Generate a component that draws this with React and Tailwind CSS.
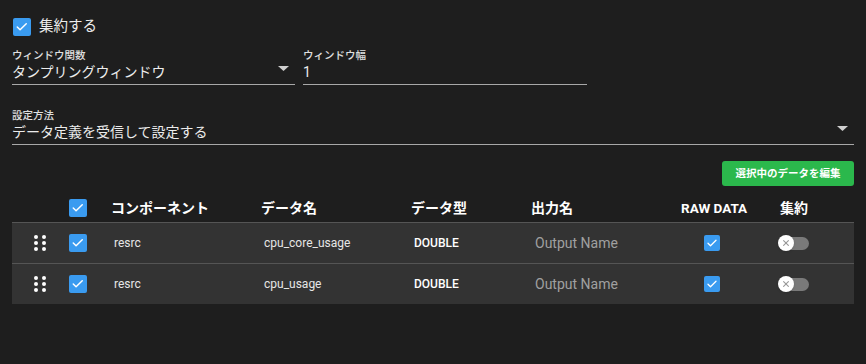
import React from "react";

const font = { fontFamily: "Roboto, 'Noto Sans CJK JP', sans-serif" };

function Check({ size = 18 }) {
  return (
    <div
      className="flex items-center justify-center rounded-[2px] bg-[#3a9bf0]"
      style={{ width: size, height: size }}
    >
      <svg width={size * 0.75} height={size * 0.75} viewBox="0 0 24 24" fill="none">
        <path d="M4 12.5l5 5L20 6.5" stroke="white" strokeWidth="2.6" strokeLinecap="round" strokeLinejoin="round" />
      </svg>
    </div>
  );
}

function Handle() {
  return (
    <div className="grid grid-cols-2 gap-x-[4px] gap-y-[2px] w-[12px]">
      {[0, 1, 2, 3, 4, 5].map((i) => (
        <div key={i} className="w-[4px] h-[4px] rounded-full bg-white" />
      ))}
    </div>
  );
}

function Toggle() {
  return (
    <div className="relative w-[31px] h-[16px] flex items-center">
      <div className="absolute left-[6px] right-0 h-[13px] rounded-full bg-[#7a7a7a]" />
      <div className="relative w-[16px] h-[16px] rounded-full bg-white flex items-center justify-center shadow">
        <svg width="8" height="8" viewBox="0 0 10 10">
          <path d="M2 2L8 8M8 2L2 8" stroke="#9a9a9a" strokeWidth="1.4" strokeLinecap="round" />
        </svg>
      </div>
    </div>
  );
}

function Arrow() {
  return (
    <svg width="11" height="5" viewBox="0 0 11 5">
      <path d="M0 0H11L5.5 5Z" fill="#cfcfcf" />
    </svg>
  );
}

function Field({ label, value, arrow, className }) {
  return (
    <div className={"border-b border-[#a8a8a8] pb-[2px] " + className}>
      <div className="text-[10.5px] leading-[12px] text-[#e0e0e0] font-medium">{label}</div>
      <div className="flex items-center justify-between h-[20px]">
        <span className="text-[14px] leading-[20px] text-[#ececec]">{value}</span>
        {arrow && <div className="mr-[6px] -mt-[8px]"><Arrow /></div>}
      </div>
    </div>
  );
}

const rows = [
  { comp: "resrc", name: "cpu_core_usage", type: "DOUBLE" },
  { comp: "resrc", name: "cpu_usage", type: "DOUBLE" },
];

export default function App() {
  return (
    <div className="w-[866px] h-[364px] bg-[#1e1e1e] px-3 overflow-hidden" style={font}>
      <div className="flex items-center gap-[8px] pt-[18px] pl-px">
        <Check size={18} />
        <span className="text-[14.5px] leading-[18px] text-[#ececec]">集約する</span>
      </div>

      <div className="flex gap-[8px] mt-[14px]">
        <Field className="w-[283px]" label="ウィンドウ関数" value="タンプリングウィンドウ" arrow />
        <Field className="w-[284px]" label="ウィンドウ幅" value="1" />
      </div>

      <Field className="mt-[25px]" label="設定方法" value="データ定義を受信して設定する" arrow />

      <div className="flex justify-end mt-[16px]">
        <button className="h-[25px] w-[132px] rounded-[3px] bg-[#2bb84c] text-white text-[10.5px] font-bold">
          選択中のデータを編集
        </button>
      </div>

      <div className="mt-[8px]">
        <div className="flex items-center h-[28px] text-white font-bold text-[14px]">
          <div className="w-[45px]" />
          <div className="w-[42px] pl-[12px]"><Check size={18} /></div>
          <div className="w-[150px] pl-[12px]">コンポーネント</div>
          <div className="w-[150px] pl-[12px]">データ名</div>
          <div className="w-[120px] pl-[12px]">データ型</div>
          <div className="w-[150px] pl-[12px]">出力名</div>
          <div className="w-[100px] pl-[12px] text-[13.5px]">RAW DATA</div>
          <div className="flex-1 pl-[11px]">集約</div>
        </div>
        {rows.map((r, i) => (
          <div key={i} className="flex items-center h-[41px] bg-[#333333] border-t border-[#555555]">
            <div className="w-[45px] pl-[22px]"><Handle /></div>
            <div className="w-[42px] pl-[12px]"><Check size={18} /></div>
            <div className="w-[150px] pl-[15px] text-[12px] text-[#e6e6e6]">{r.comp}</div>
            <div className="w-[150px] pl-[15px] text-[12px] text-[#e6e6e6]">{r.name}</div>
            <div className="w-[120px] pl-[15px] text-[12px] font-medium text-white">{r.type}</div>
            <div className="w-[150px] pl-[16px] text-[14px] text-[#a0a0a0]">Output Name</div>
            <div className="w-[100px] pl-[35px]"><Check size={16} /></div>
            <div className="flex-1 pl-[9px]"><Toggle /></div>
          </div>
        ))}
      </div>
    </div>
  );
}
